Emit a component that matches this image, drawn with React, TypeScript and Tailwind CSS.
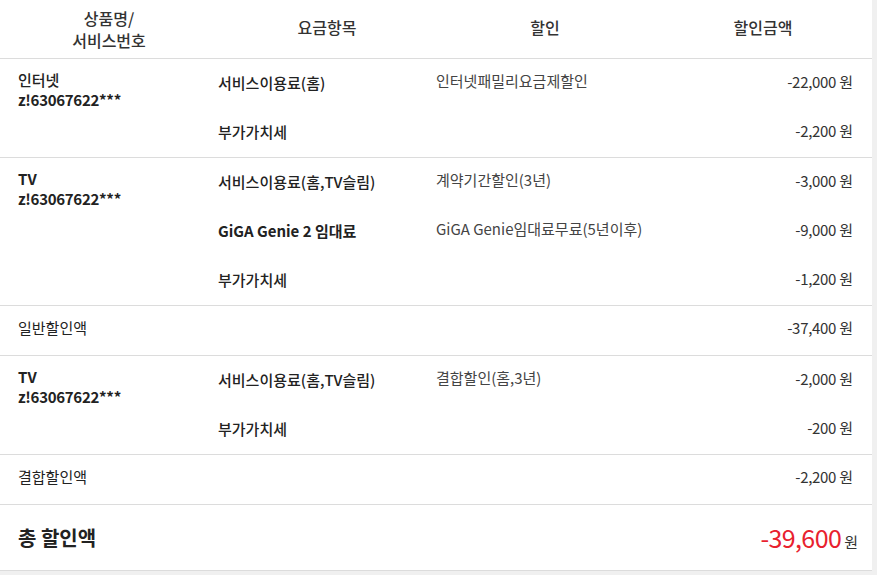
import React from 'react';

type Line = { item: string; bold?: boolean; discount?: string; amount: string };
type Group = { name: string; number: string; lines: Line[] };

const groupA: Group = {
  name: '인터넷',
  number: 'z!63067622***',
  lines: [
    { item: '서비스이용료(홈)', discount: '인터넷패밀리요금제할인', amount: '-22,000' },
    { item: '부가가치세', amount: '-2,200' },
  ],
};

const groupB: Group = {
  name: 'TV',
  number: 'z!63067622***',
  lines: [
    { item: '서비스이용료(홈,TV슬림)', discount: '계약기간할인(3년)', amount: '-3,000' },
    { item: 'GiGA Genie 2 임대료', bold: true, discount: 'GiGA Genie임대료무료(5년이후)', amount: '-9,000' },
    { item: '부가가치세', amount: '-1,200' },
  ],
};

const groupC: Group = {
  name: 'TV',
  number: 'z!63067622***',
  lines: [
    { item: '서비스이용료(홈,TV슬림)', discount: '결합할인(홈,3년)', amount: '-2,000' },
    { item: '부가가치세', amount: '-200' },
  ],
};

function Amount({ value }: { value: string }) {
  return (
    <span className="tracking-[-0.3px] text-[#333]">
      {value} <span className="tracking-normal">원</span>
    </span>
  );
}

function GroupRows({ group }: { group: Group }) {
  const span = group.lines.length === 3 ? 'row-span-3' : 'row-span-2';
  return (
    <div className="grid grid-cols-4 border-b border-[#dcdcdc]">
      <div className={`${span} pl-[18px] pt-[11px] text-[15px] leading-[20px] text-[#222]`}>
        <div className={group.name === 'TV' ? 'font-bold' : 'font-medium'}>{group.name}</div>
        <div className="font-bold tracking-[-0.3px]">{group.number}</div>
      </div>
      {group.lines.map((l, i) => (
        <React.Fragment key={i}>
          <div className={`h-[49px] pt-[14px] leading-[20px] text-[15px] text-[#222] ${l.bold ? 'font-bold' : 'font-medium'}`}>
            {l.item}
          </div>
          <div className="h-[49px] pt-[12px] leading-[20px] text-[15px] text-[#444]">{l.discount ?? ''}</div>
          <div className="h-[49px] pt-[13px] leading-[20px] text-[15px] text-right pr-[19px]">
            <Amount value={l.amount} />
          </div>
        </React.Fragment>
      ))}
    </div>
  );
}

function SumRow({ label, amount }: { label: string; amount: string }) {
  return (
    <div className="flex h-[50px] items-center justify-between border-b border-[#dcdcdc] pl-[18px] pr-[19px] pb-[4px] text-[15px]">
      <span className="text-[#222]">{label}</span>
      <Amount value={amount} />
    </div>
  );
}

export default function App() {
  return (
    <div className="min-h-screen bg-[#f0f0f0]" style={{ fontFamily: '"Noto Sans CJK KR", "Noto Sans", sans-serif' }}>
      <div className="w-[872px] bg-white">
        <div className="grid h-[59px] grid-cols-4 items-center border-b border-[#dcdcdc] text-center text-[16px] font-medium text-[#333]">
          <div className="flex flex-col leading-[22px]">
            <span>상품명/</span>
            <span>서비스번호</span>
          </div>
          <div className="pb-[4px]">요금항목</div>
          <div className="pb-[4px]">할인</div>
          <div className="pb-[4px]">할인금액</div>
        </div>
        <GroupRows group={groupA} />
        <GroupRows group={groupB} />
        <SumRow label="일반할인액" amount="-37,400" />
        <GroupRows group={groupC} />
        <SumRow label="결합할인액" amount="-2,200" />
        <div className="flex h-[66px] items-center justify-between border-b border-[#dcdcdc] pl-[18px] pr-[14px]">
          <span className="text-[20px] font-bold text-[#222]">총 할인액</span>
          <span className="flex items-baseline">
            <span className="text-[25px] tracking-[-0.6px] text-[#e8212e]">-39,600</span>
            <span className="ml-[3px] text-[15px] text-[#333]">원</span>
          </span>
        </div>
      </div>
    </div>
  );
}
